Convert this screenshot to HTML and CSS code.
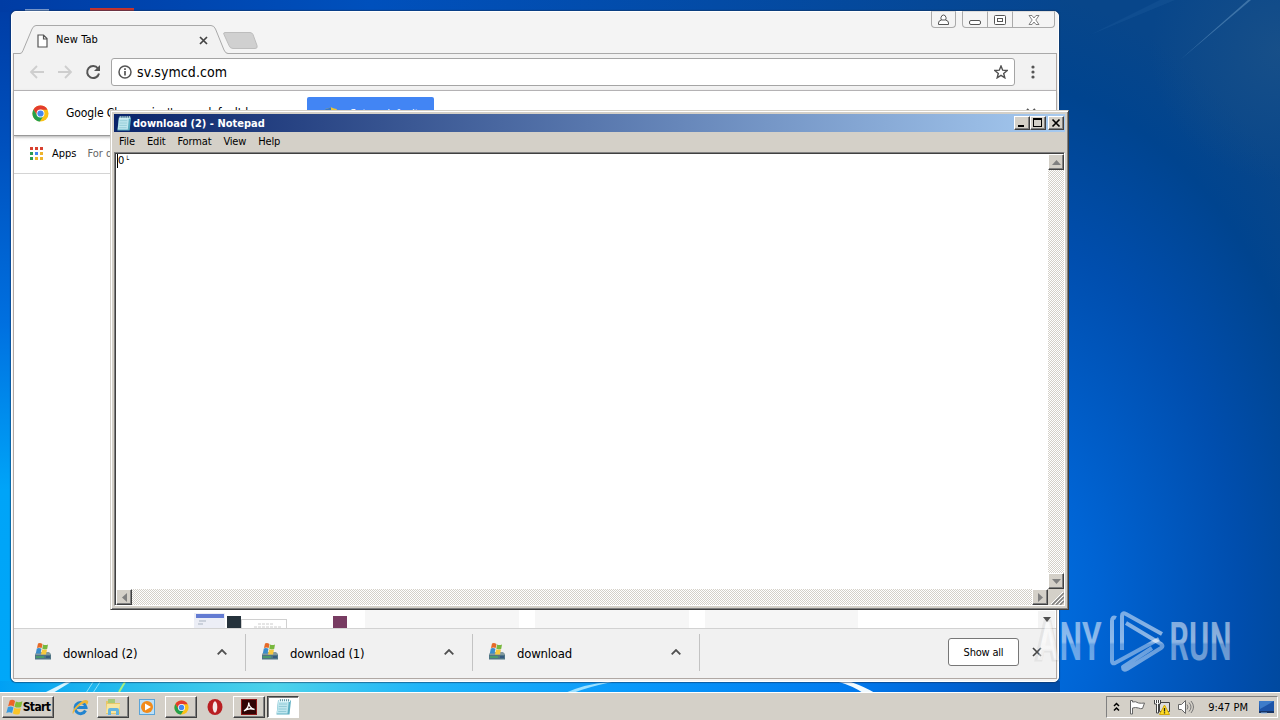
FILE: index.html
```html
<!DOCTYPE html>
<html lang="en">
<head>
    <meta charset="UTF-8">
    <meta name="viewport" content="width=device-width, initial-scale=1.0">
    <title>Desktop</title>
    <link rel="stylesheet" href="styles.css">
</head>
<body>

    <!-- Shared icons -->
    <svg class="defs" width="0" height="0">
        <symbol id="chrome" viewBox="0 0 18 18">
            <circle cx="9" cy="9" r="8.5" fill="#fbc116"/>
            <path d="M1.600 4.800A8.500 8.500 0 0 1 16.400 5H9L5.400 10.800z" fill="#e33b2e"/>
            <path d="M1.600 4.800A8.500 8.500 0 0 0 8.300 17.500L12.400 11 5.500 11z" fill="#24a04c"/>
            <circle cx="9" cy="9" r="4.2" fill="#fff"/>
            <circle cx="9" cy="9" r="3.3" fill="#4587f0"/>
        </symbol>
        <symbol id="winflag" viewBox="0 0 16 16">
            <path d="M3.500 1.500Q6 0 8.500 1.800L7.300 7Q4.800 5.400 2 6.800z" fill="#ee6428"/>
            <path d="M9.300 2.300Q12 3.800 15.500 2L14.200 7.500Q11 8.800 8 7.300z" fill="#83bd36"/>
            <path d="M1.800 7.600Q4.500 6.300 7 7.900L5.700 13.200Q3 11.700.3 13.200z" fill="#389ade"/>
            <path d="M7.800 8.200Q10.600 9.800 14 8.400L12.700 14Q9.400 15.400 6.500 13.600z" fill="#fac528"/>
        </symbol>
        <symbol id="installer" viewBox="0 0 18 18">
            <path d="M1 11l2-2h12l2 2v5H1z" fill="#8199a0"/>
            <path d="M1 12h16v4.500H1z" fill="#4f7585"/>
            <path d="M2 13h8v2H2z" fill="#4a9a6c"/>
            <path d="M12 13h4v2h-4z" fill="#355a80"/>
            <path d="M4 .500Q6 -.500 8.500 1l-.8 4Q5.500 4 3 5z" fill="#e66a28"/>
            <path d="M9 1.500q2.500 1.200 5 0l-.8 4.500q-2.300 1-4.900-.200z" fill="#78b83e"/>
            <path d="M2.800 5.500q2.300-1 4.700.3L6.500 10.500H1.800z" fill="#3a8dcc"/>
            <path d="M8.200 6.200q2.500 1.100 4.800.3L12 11.500H7z" fill="#f8c83c"/>
        </symbol>
        <symbol id="notepad" viewBox="0 0 17 18">
            <path d="M3 2.500h13l-1.500 14H1.500z" fill="#5dafc2"/>
            <path d="M3.200 3h10.600l-1.300 12.500H1.800z" fill="#bfe6ee"/>
            <path d="M4 6h8M3.800 8.500h8M3.500 11h8M3.300 13.500h8" stroke="#88c4d0" stroke-width=".8"/>
            <path d="M4.500 1v3M6.500 1v3M8.500 1v3M10.500 1v3M12.500 1v3M14.500 1v3" stroke="#e9f7fa" stroke-width="1"/>
            <path d="M5.500 1v2M7.500 1v2M9.500 1v2M11.500 1v2M13.500 1v2" stroke="#477d8b" stroke-width=".7"/>
        </symbol>
        <symbol id="chevron" viewBox="0 0 10 6">
            <path d="M.7 5.300L5 1l4.300 4.300" fill="none" stroke="#505050" stroke-width="1.800"/>
        </symbol>
    </svg>

    <div class="desktop">

        <svg class="wallpaper" width="1280" height="720" viewBox="0 0 1280 720">
            <defs>
                <linearGradient id="left" x1="0" y1="0" x2="0" y2="1">
                    <stop offset="0" stop-color="#003ca4"/>
                    <stop offset=".2" stop-color="#0050bd"/>
                    <stop offset=".45" stop-color="#0070e0"/>
                    <stop offset=".68" stop-color="#00a4f8"/>
                    <stop offset="1" stop-color="#00a8f8"/>
                </linearGradient>
                <linearGradient id="top" x1="0" y1="0" x2="1" y2="0">
                    <stop offset="0" stop-color="#003ca4"/>
                    <stop offset=".35" stop-color="#0050bc"/>
                    <stop offset="1" stop-color="#06468f"/>
                </linearGradient>
                <radialGradient id="right" gradientUnits="userSpaceOnUse" cx="1000" cy="610" r="620" gradientTransform="translate(1000 0) scale(.64 1) translate(-1000 0)">
                    <stop offset="0" stop-color="#0074e6"/>
                    <stop offset=".25" stop-color="#0064d4"/>
                    <stop offset=".6" stop-color="#004eae"/>
                    <stop offset=".85" stop-color="#00448f"/>
                    <stop offset="1" stop-color="#08468a"/>
                </radialGradient>
                <linearGradient id="bottom" x1="0" y1="0" x2="1" y2="0">
                    <stop offset="0" stop-color="#00a0f4"/>
                    <stop offset=".12" stop-color="#28bcec"/>
                    <stop offset=".26" stop-color="#4cd2ea"/>
                    <stop offset=".4" stop-color="#20b4f8"/>
                    <stop offset=".6" stop-color="#0898fa"/>
                    <stop offset=".8" stop-color="#007aee"/>
                    <stop offset=".9" stop-color="#0062d2"/>
                    <stop offset="1" stop-color="#004ca8"/>
                </linearGradient>
                <radialGradient id="corner">
                    <stop offset="0" stop-color="#1c5288" stop-opacity=".75"/>
                    <stop offset="1" stop-color="#1c5288" stop-opacity="0"/>
                </radialGradient>
            </defs>
            <rect width="1000" height="720" fill="url(#left)"/>
            <rect x="1000" width="280" height="720" fill="url(#right)"/>
            <rect width="1060" height="12" fill="url(#top)"/>
            <rect y="681" width="1060" height="12" fill="url(#bottom)"/>
            <circle cx="1280" cy="50" r="130" fill="url(#corner)"/>
            <path d="M1180 60L1248 0h3z" fill="#6a9cc8" opacity=".5"/>
            <path d="M1090 35L1160 0h15z" fill="#3b7cb8" opacity=".15"/>
            <path d="M44 693L66 682h5L53 693z" fill="#d6f4ff"/>
            <path d="M86 693l7-11M93 693l7-11" stroke="#8be0f8"/>
            <path d="M119 692l6-10" stroke="#a6f080" stroke-width="2"/>
            <path d="M565 693q20-9 43-11h4q-24 5-39 11z" fill="#9be0ff"/>
            <path d="M839 682h12q14 5 24 11h-12q-10-7-24-11z" fill="#f0faff"/>
            <rect x="90" y="8" width="44" height="4" fill="#c8342c"/>
            <rect x="25" y="9" width="24" height="2" fill="#7c9cd0"/>
        </svg>

        <!-- Chrome window -->
        <div class="chrome">
            <div class="tabstrip">
                <svg class="tab-shape" width="250" height="31" viewBox="0 0 250 31">
                    <path d="M0 29.500H6q2 0 3-3L18 5q1.500-3.500 4-3.500H197q3 0 4.500 3.500L210 26q1.500 3.500 4 3.500h36V31H0z" fill="#f2f2f2"/>
                    <path d="M0 29.500H6q2 0 3-3L18 5q1.500-3.500 4-3.500H197q3 0 4.500 3.500L210 26q1.500 3.500 4 3.500h36" fill="none" stroke="#a9a9a9"/>
                    <path d="M211 8.500h25q2 0 3 2l4 11q1 3-2 3h-22q-3 0-4-3l-5-11q-1-2 1-2z" fill="#d0d0d0" stroke="#bdbdbd"/>
                </svg>
                <div class="tab">
                    <svg width="11" height="14" viewBox="0 0 11 14"><path d="M1 1h5.500L10 4.500V13H1zM6.500 1v4H10" fill="#fff" stroke="#555" stroke-width="1.200"/></svg>
                    <span class="tab-title">New Tab</span>
                    <svg class="tab-close" width="9" height="9" viewBox="0 0 9 9"><path d="M1 1l7 7M8 1L1 8" stroke="#444" stroke-width="1.700"/></svg>
                </div>
                <div class="caption-buttons">
                    <span class="caption user"><svg width="11" height="11" viewBox="0 0 11 11"><path d="M3.500 6Q2.700 5 3 3.500q.5-2.500 2.500-2.500T8 3.500Q8.300 5 7.500 6q3 .5 3 3v1.500H.5V9q0-2.500 3-3zM3.500 6h4" fill="#fff" stroke="#555"/></svg></span>
                    <span class="caption cap-min"><svg width="12" height="5" viewBox="0 0 12 5"><rect x=".5" y=".5" width="11" height="4" rx="1.500" fill="#fff" stroke="#555"/></svg></span>
                    <span class="caption cap-max"><svg width="12" height="10" viewBox="0 0 12 10"><rect x=".5" y=".5" width="11" height="9" rx="1" fill="#fff" stroke="#555"/><rect x="3.500" y="3.500" width="5" height="3" fill="#fff" stroke="#555"/></svg></span>
                    <span class="caption cap-close"><svg width="12" height="10" viewBox="0 0 12 10"><path d="M1 .5h3l2 2.500L8 .5h3L7.800 5 11 9.500H8L6 7 4 9.500H1L4.200 5z" fill="#fff" stroke="#666" stroke-width=".8"/></svg></span>
                </div>
            </div>

            <div class="chrome-body">
                <div class="toolbar">
                    <svg width="16" height="14" viewBox="0 0 16 14"><path d="M15 7H2M8 1L2 7l6 6" fill="none" stroke="#cecece" stroke-width="1.800"/></svg>
                    <svg width="16" height="14" viewBox="0 0 16 14"><path d="M1 7h13M8 1l6 6-6 6" fill="none" stroke="#cecece" stroke-width="1.800"/></svg>
                    <svg width="16" height="16" viewBox="0 0 16 16"><path d="M13 4.500A6 6 0 1 0 14 9.500" fill="none" stroke="#555" stroke-width="2"/><path d="M15 1v6H9z" fill="#555"/></svg>
                    <div class="omnibox">
                        <svg width="14" height="14" viewBox="0 0 14 14"><circle cx="7" cy="7" r="6" fill="none" stroke="#555" stroke-width="1.500"/><path d="M7 6v4.500M7 3.300v1.600" stroke="#555" stroke-width="1.700"/></svg>
                        <span class="url">sv.symcd.com</span>
                        <svg class="star" width="14" height="14" viewBox="0 0 14 14"><path d="M7 1l1.700 4.200 4.400.3-3.400 2.900 1.100 4.400L7 10.400l-3.800 2.400 1.100-4.400L.9 5.500l4.400-.3z" fill="none" stroke="#505050" stroke-width="1.400"/></svg>
                    </div>
                    <svg class="kebab" width="4" height="14" viewBox="0 0 4 14"><circle cx="2" cy="2" r="1.600" fill="#555"/><circle cx="2" cy="7" r="1.600" fill="#555"/><circle cx="2" cy="12" r="1.600" fill="#555"/></svg>
                </div>

                <div class="infobar">
                    <svg width="17" height="17"><use href="#chrome"/></svg>
                    <span class="infobar-text">Google Chrome isn't your default browser</span>
                    <span class="default-button">
                        <svg width="14" height="15" viewBox="0 0 12 13"><path d="M6 1q3 1.500 5 1.500v4.500q-1 4-5 5-4-1-5-5V2.500Q3 2.500 6 1z" fill="#e8c43a"/><path d="M6 1q-3 1.500-5 1.500V7h5z" fill="#3878c8"/></svg>
                        <span>Set as default</span>
                    </span>
                    <svg class="infobar-close" width="10" height="10" viewBox="0 0 10 10"><path d="M1 1l8 8M9 1L1 9" stroke="#555" stroke-width="1.800"/></svg>
                </div>

                <div class="bookmarks">
                    <svg width="13" height="13" viewBox="0 0 13 13">
                        <path d="M0 0h3v3H0zM5 0h3v3H5zM10 0h3v3h-3z" fill="#d8402f"/>
                        <path d="M0 5h3v3H0zM0 10h3v3H0z" fill="#2c9b55"/>
                        <path d="M5 5h3v3H5z" fill="#4285f4"/>
                        <path d="M10 5h3v3h-3zM10 10h3v3h-3zM5 10h3v3H5z" fill="#eeb42c"/>
                    </svg>
                    <span class="apps">Apps</span>
                    <span class="hint">For quick access</span>
                </div>

                <!-- Page content, mostly hidden by Notepad -->
                <div class="page">
                    <svg width="664" height="18" viewBox="0 0 664 18">
                        <rect x="0" y="3" width="31" height="15" fill="#eceef6"/>
                        <rect x="2" y="4" width="28" height="4" fill="#637bd2"/>
                        <path d="M5 11h7M4 14h5" stroke="#a9b3c0"/>
                        <rect x="33" y="6" width="14" height="12" fill="#25323c"/>
                        <rect x="47.500" y="9.500" width="45" height="9" fill="#fff" stroke="#d0d0d0"/>
                        <path d="M64 14h16M60 17h28" stroke="#ccc" stroke-dasharray="3 1"/>
                        <rect x="139" y="6" width="14" height="12" fill="#783c62"/>
                        <path d="M171 0h154v18H171zM341 0h154v18H341zM511 0h153v18H511z" fill="#f6f6f6"/>
                    </svg>
                    <span class="page-scroll"><i></i></span>
                </div>

                <div class="shelf">
                    <div class="download">
                        <svg width="18" height="18"><use href="#installer"/></svg>
                        <span class="file">download (2)</span>
                        <svg width="10" height="6"><use href="#chevron"/></svg>
                    </div>
                    <div class="download">
                        <svg width="18" height="18"><use href="#installer"/></svg>
                        <span class="file">download (1)</span>
                        <svg width="10" height="6"><use href="#chevron"/></svg>
                    </div>
                    <div class="download">
                        <svg width="18" height="18"><use href="#installer"/></svg>
                        <span class="file">download</span>
                        <svg width="10" height="6"><use href="#chevron"/></svg>
                    </div>
                    <button class="show-all">Show all</button>
                    <svg class="shelf-close" width="10" height="10" viewBox="0 0 10 10"><path d="M1 1l8 8M9 1L1 9" stroke="#444" stroke-width="1.700"/></svg>
                </div>
            </div>
        </div>

        <!-- Notepad window -->
        <div class="notepad">
            <div class="titlebar">
                <svg width="16" height="17"><use href="#notepad"/></svg>
                <span class="title">download (2) - Notepad</span>
                <div class="title-buttons">
                    <span class="bevel"><svg width="12" height="10" viewBox="0 0 12 10"><path d="M2 7h6v2H2z"/></svg></span>
                    <span class="bevel"><svg width="12" height="10" viewBox="0 0 12 10"><path d="M1 0h9v9H1zM2 2v6h7V2z" fill-rule="evenodd"/></svg></span>
                    <span class="bevel bevel-close"><svg width="12" height="10" viewBox="0 0 12 10"><path d="M2.500 1.500l7 7M9.500 1.500l-7 7" stroke="#000" stroke-width="1.700"/></svg></span>
                </div>
            </div>
            <div class="menubar">
                <span>File</span>
                <span>Edit</span>
                <span>Format</span>
                <span>View</span>
                <span>Help</span>
            </div>
            <div class="editor">
                <div class="text"><span class="caret"></span>0<span class="low">└</span></div>
                <div class="vscroll">
                    <span class="bevel"><svg width="9" height="5" viewBox="0 0 9 5"><path d="M0 5L4.500 0 9 5z" fill="#808080"/></svg></span>
                    <span class="bevel"><svg width="9" height="5" viewBox="0 0 9 5"><path d="M0 0h9L4.500 5z" fill="#808080"/></svg></span>
                </div>
                <div class="hscroll">
                    <span class="bevel"><svg width="5" height="9" viewBox="0 0 5 9"><path d="M5 0v9L0 4.500z" fill="#808080"/></svg></span>
                    <span class="bevel"><svg width="5" height="9" viewBox="0 0 5 9"><path d="M0 0v9l5-4.500z" fill="#808080"/></svg></span>
                </div>
                <div class="grip">
                    <svg width="14" height="14" viewBox="0 0 14 14"><path d="M2 14L14 2M6 14l8-8M10 14l4-4" stroke="#808080" stroke-width="1.500"/><path d="M1 13L13 1M5 13l8-8M9 13l4-4" stroke="#fff"/></svg>
                </div>
            </div>
        </div>

        <!-- Watermark -->
        <svg class="watermark" width="230" height="70" viewBox="0 0 230 70">
            <defs>
                <linearGradient id="fade" gradientUnits="userSpaceOnUse" x1="0" y1="6" x2="0" y2="66">
                    <stop offset="0" stop-color="#fff" stop-opacity=".48"/>
                    <stop offset=".5" stop-color="#fff" stop-opacity=".56"/>
                    <stop offset=".54" stop-color="#fff" stop-opacity=".4"/>
                    <stop offset="1" stop-color="#fff" stop-opacity=".46"/>
                </linearGradient>
            </defs>
            <path d="M15 15h5l8 39h-5l-2-9h-8l-2 9H6z" fill="none" stroke="#888" stroke-width="3" opacity=".12"/>
            <g fill="url(#fade)" class="mark-text">
                <text x="7" y="54" textLength="65" lengthAdjust="spacingAndGlyphs">ANY</text>
                <text x="139" y="54" textLength="63" lengthAdjust="spacingAndGlyphs">RUN</text>
            </g>
            <g fill="none" stroke="url(#fade)" stroke-width="4" stroke-linejoin="round">
                <path d="M86 12q-4-2-4 3v40q0 3 3 2l44-24"/>
                <path d="M92 44V10q0-4 4-2l36 20"/>
                <path d="M96 17l35 21q3 2 0 4L97 63q-4 2-4-2l29-19"/>
            </g>
        </svg>

        <!-- Taskbar -->
        <div class="taskbar">
            <div class="task start"><svg width="17" height="17"><use href="#winflag"/></svg><span>Start</span></div>
            <div class="quick">
                <svg width="17" height="17" viewBox="0 0 17 17"><path d="M13.500 11.500A5.500 5.500 0 1 1 14 8.500H5" fill="none" stroke="#2384cf" stroke-width="3"/><path d="M1 15Q-1 12 6 5.500T16 2q1 2-2 4.500 1-3-1.500-2.500Q9 5 5.500 8.500T1.500 14z" fill="#edb63a"/></svg>
            </div>
            <div class="task"><svg width="18" height="18" viewBox="0 0 18 18"><path d="M2 3h6l1 2h7v11H2z" fill="#e8c768"/><path d="M4 1h7v4H4z" fill="#a7ca78"/><path d="M3 6h13l-1 9H2z" fill="#f7e6a1"/><path d="M4 17v-5q0-2 2-2h7q2 0 2 2v5h-3v-4H7v4z" fill="#65b4df"/></svg></div>
            <div class="quick"><svg width="16" height="16" viewBox="0 0 16 16"><rect x=".5" y=".5" width="15" height="15" fill="#bce0f8" stroke="#5ba4d8"/><circle cx="8" cy="8" r="6" fill="#f28b1b"/><path d="M6 4.500L12 8l-6 3.500z" fill="#fff"/></svg></div>
            <div class="task"><svg width="15" height="15"><use href="#chrome"/></svg></div>
            <div class="quick"><svg width="16" height="16" viewBox="0 0 16 16"><ellipse cx="8" cy="8" rx="7.500" ry="8" fill="#b91f22"/><ellipse cx="8" cy="8" rx="2.300" ry="5.700" fill="#f5e9e8"/></svg></div>
            <div class="task"><svg width="16" height="16" viewBox="0 0 16 16"><rect width="16" height="16" fill="#300505"/><rect x=".5" y=".5" width="15" height="15" fill="none" stroke="#8c1818"/><path d="M3 12Q8 9 7.700 3.500 8 9 13.500 10.500 8 8.500 3 12z" fill="none" stroke="#fff" stroke-width="1.300"/></svg></div>
            <div class="task active"><svg width="17" height="18"><use href="#notepad"/></svg></div>

            <div class="tray">
                <svg width="7" height="10" viewBox="0 0 7 10"><path d="M1 4l2.500-2.500L6 4M1 8.500L3.500 6 6 8.500" fill="none" stroke="#000" stroke-width="1.500"/></svg>
                <svg class="flag" width="16" height="16" viewBox="0 0 16 16"><path d="M.5 1.500h2V3q3-1 6 1 3 .5 6 0l-2 5.500q-2 .5-4-.500-3-1-6 0v6h-2z" fill="#fff" stroke="#666"/></svg>
                <svg class="net" width="16" height="16" viewBox="0 0 16 16"><path d="M5.500 3.500h10v9h-10z" fill="#ddd" stroke="#444"/><path d="M.5 1v4h2v9h2V5h2V1M2.500 1v3M4.500 1v3" fill="#fff" stroke="#444"/><path d="M10.500 6l5 9.500h-10z" fill="#ffdc23" stroke="#d2a80a"/><path d="M10.500 9v3.500M10.500 13.300v1.200" stroke="#222" stroke-width="1.300"/></svg>
                <svg class="sound" width="16" height="16" viewBox="0 0 16 16"><path d="M.5 5.500h3l4-4v13l-4-4h-3z" fill="#fff" stroke="#666"/><path d="M9 5.500q2 2.500 0 5M11 3.500q4 4.500 0 9M13 2q5 6 0 12" fill="none" stroke="#777"/></svg>
                <span class="clock">9:47 PM</span>
                <svg width="15" height="13" viewBox="0 0 15 13"><rect width="15" height="10" fill="#1c54a8"/><path d="M0 0h15L1 8z" fill="#3d7cca"/><path d="M0 10h15v2H0z" fill="#163466"/><path d="M2 12h6" stroke="#8bb8ea"/></svg>
            </div>
        </div>
    </div>

</body>
</html>
```
FILE: styles.css
```css
* {
    box-sizing: border-box;
}

body {
    margin: 0;
    font-family: "DejaVu Sans Condensed", "DejaVu Sans", sans-serif;
    font-stretch: condensed;
    font-size: 11px;
    color: #000;
    overflow: hidden;
}

svg {
    display: block;
    flex: none;
}

.defs {
    position: absolute;
}

.desktop {
    position: relative;
    width: 1280px;
    height: 720px;
    overflow: hidden;
    white-space: nowrap;
}

.wallpaper {
    position: absolute;
    left: 0;
    top: 0;
}

/* Chrome */
.chrome {
    position: absolute;
    left: 11px;
    top: 11px;
    width: 1048px;
    height: 671px;
    display: flex;
    flex-direction: column;
    padding: 0 1px 2px;
    background: #f4f4f4;
    border: 1px solid #fff;
    border-radius: 5px;
    box-shadow: 0 0 1px 1px rgba(20, 50, 90, 0.55);
}

.tabstrip {
    position: relative;
    display: flex;
    justify-content: space-between;
    height: 42px;
    border-bottom: 1px solid #a9a9a9;
}

.tab-shape {
    position: absolute;
    left: 1px;
    top: 12px;
}

.tab {
    position: relative;
    display: flex;
    align-items: center;
    width: 195px;
    height: 27px;
    margin: 15px 0 0 24px;
}

.tab-title {
    margin-left: 8px;
    margin-top: -2px;
    letter-spacing: 0.1px;
}

.tab-close {
    margin-left: auto;
    margin-right: 24px;
}

.caption-buttons {
    display: flex;
    align-items: flex-start;
    margin-right: 2px;
    margin-top: -1px;
}

.caption {
    display: flex;
    justify-content: center;
    align-items: center;
    width: 26px;
    height: 17px;
    border: 1px solid #aaa;
    border-top-color: #ddd;
    border-left: none;
}

.user {
    width: 25px;
    margin-right: 6px;
    border-left: 1px solid #aaa;
    border-radius: 0 0 4px 4px;
}

.cap-min {
    padding-top: 5px;
    border-left: 1px solid #aaa;
    border-bottom-left-radius: 4px;
}

.cap-max {
    width: 25px;
}

.cap-close {
    width: 42px;
    border-bottom-right-radius: 4px;
}

.chrome-body {
    flex: 1;
    min-height: 0;
    display: flex;
    flex-direction: column;
    border: 1px solid #b0a8a4;
    border-top: none;
    background: #fff;
}

.toolbar {
    display: flex;
    align-items: center;
    gap: 12px;
    height: 37px;
    padding: 0 21px 0 15px;
    background: #f2f2f2;
    border-bottom: 1px solid #b6b4b6;
}

.omnibox {
    display: flex;
    align-items: center;
    flex: 1;
    height: 28px;
    margin-left: -2px;
    padding: 0 6px;
    background: #fff;
    border: 1px solid #a5a5a5;
    border-radius: 3px;
}

.url {
    margin-left: 5px;
    font-size: 14px;
    letter-spacing: 0.1px;
}

.star {
    margin-left: auto;
}

.kebab {
    margin-left: 4px;
}

.infobar {
    display: flex;
    align-items: center;
    height: 45px;
    padding: 0 20px 0 18px;
    border-bottom: 1px solid #999;
    box-shadow: 0 1px 3px #aaa;
}

.infobar-text {
    width: 241px;
    margin-left: 17px;
    font-size: 12px;
    letter-spacing: -0.1px;
}

.default-button {
    display: flex;
    align-items: center;
    gap: 12px;
    width: 127px;
    height: 32px;
    padding-left: 17px;
    border-radius: 2px;
    background: #4285f4;
    color: #fff;
}

.infobar-close {
    margin-left: auto;
}

.bookmarks {
    display: flex;
    align-items: center;
    height: 38px;
    padding: 0 0 3px 16px;
    border-bottom: 1px solid #d4d4d4;
}

.apps {
    margin-left: 9px;
}

.hint {
    margin-left: 11px;
    color: #666;
}

.page {
    flex: 1;
    display: flex;
    justify-content: space-between;
    align-items: flex-end;
    padding-left: 180px;
    padding-right: 1px;
}

.page-scroll {
    display: flex;
    justify-content: center;
    width: 17px;
    height: 17px;
    padding-top: 6px;
    background: #f4f4f4;
}

.page-scroll i {
    width: 0;
    height: 0;
    border: 4px solid transparent;
    border-top: 5px solid #505050;
}

.shelf {
    display: flex;
    align-items: center;
    height: 50px;
    padding-bottom: 3px;
    padding-right: 14px;
    background: #f1f1f1;
    border-top: 1px solid #d2d2d2;
}

.download {
    display: flex;
    align-items: center;
    width: 227px;
    height: 37px;
    padding: 0 18px 0 15px;
    border-right: 1px solid #c3c3c3;
}

.download:first-child {
    width: 232px;
    padding-left: 20px;
}

.file {
    flex: 1;
    margin-left: 11px;
    margin-top: 3px;
    font-size: 13px;
    letter-spacing: -0.2px;
}

.show-all {
    width: 71px;
    height: 28px;
    margin-left: auto;
    margin-right: 13px;
    padding: 0;
    border: 1px solid #777;
    border-radius: 3px;
    background: #fff;
    font: inherit;
    letter-spacing: -0.2px;
}

/* Notepad */
.notepad {
    position: absolute;
    left: 110px;
    top: 110px;
    width: 959px;
    height: 500px;
    display: flex;
    flex-direction: column;
    padding: 2px 3px 3px 2px;
    background: #d4d0c8;
    border: 1px solid #d4d0c8;
    border-right-color: #404040;
    border-bottom-color: #404040;
    box-shadow: inset 1px 1px #fff, inset -1px -1px #808080;
}

.titlebar {
    display: flex;
    align-items: center;
    height: 18px;
    margin-top: 1px;
    margin-left: 1px;
    padding: 0 1px 0 2px;
    background: linear-gradient(90deg, #0a246a, #a6caf0);
}

.title {
    margin-left: 1px;
    color: #fff;
    font-size: 11px;
    font-weight: bold;
}

.title-buttons {
    display: flex;
    margin-left: auto;
}

.bevel {
    display: flex;
    justify-content: center;
    align-items: center;
    width: 16px;
    height: 14px;
    background: #d4d0c8;
    border: 1px solid #fff;
    border-right-color: #404040;
    border-bottom-color: #404040;
    box-shadow: inset -1px -1px #808080;
}

.bevel-close {
    margin-left: 2px;
}

.menubar {
    display: flex;
    align-items: center;
    gap: 12px;
    height: 19px;
    padding-left: 6px;
    letter-spacing: -0.15px;
}

.editor {
    flex: 1;
    display: grid;
    grid-template-columns: 1fr 16px;
    grid-template-rows: 1fr 16px;
    margin-left: 1px;
    margin-top: 1px;
    border: 1px solid #808080;
    border-right-color: #fff;
    border-bottom-color: #fff;
    box-shadow: inset 1px 1px #404040;
    padding: 1px 0 0 1px;
}

.text {
    display: flex;
    align-items: flex-start;
    background: #fff;
    padding-left: 1px;
    line-height: 14px;
}

.caret {
    width: 1px;
    height: 14px;
    background: #000;
}

.low {
    margin-left: 1px;
    font-size: 7px;
    line-height: 13px;
}

.vscroll,
.hscroll {
    display: flex;
    justify-content: space-between;
    background: repeating-conic-gradient(#d4d0c8 0 25%, #fff 0 50%) 0 0 / 2px 2px;
}

.vscroll {
    flex-direction: column;
}

.vscroll .bevel,
.hscroll .bevel {
    width: 16px;
    height: 16px;
}

.grip {
    display: flex;
    justify-content: flex-end;
    align-items: flex-end;
    background: #d4d0c8;
}

/* Watermark */
.watermark {
    position: absolute;
    left: 1030px;
    top: 606px;
}

.mark-text {
    font-family: Roboto, "Liberation Sans", sans-serif;
    font-size: 53px;
    font-weight: 500;
}

/* Taskbar */
.taskbar {
    position: absolute;
    left: 0;
    bottom: 0;
    width: 1280px;
    height: 28px;
    display: flex;
    align-items: center;
    padding: 1px 2px 0 2px;
    background: #d4d0c8;
    border-top: 1px solid #fff;
}

.task {
    display: flex;
    justify-content: center;
    align-items: center;
    width: 32px;
    height: 22px;
    border: 1px solid #fff;
    border-right-color: #404040;
    border-bottom-color: #404040;
    box-shadow: inset -1px -1px #808080;
}

.start {
    width: 52px;
    margin-right: 9px;
    font-size: 12px;
    font-weight: bold;
    letter-spacing: -0.6px;
}

.quick {
    display: flex;
    justify-content: center;
    width: 36px;
}

.quick:nth-child(2) {
    width: 34px;
}

.active {
    margin-left: 2px;
    background: #fff;
    border-color: #404040 #fff #fff #404040;
    box-shadow: inset 1px 1px #808080;
}

.tray {
    display: flex;
    align-items: center;
    width: 172px;
    height: 22px;
    margin-left: auto;
    padding: 0 3px 0 6px;
    border: 1px solid #808080;
    border-right-color: #fff;
    border-bottom-color: #fff;
}

.flag {
    margin-left: 10px;
}

.net,
.sound {
    margin-left: 8px;
}

.clock {
    margin-left: auto;
    margin-right: 11px;
}
```
